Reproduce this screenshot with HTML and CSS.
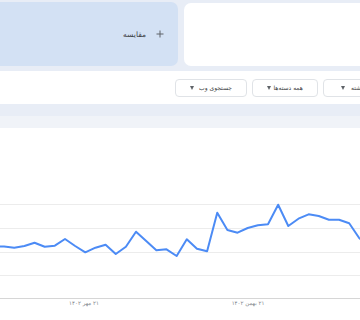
FILE: index.html
```html
<!DOCTYPE html>
<html lang="fa">
<head>
  <meta charset="UTF-8">
  <meta name="viewport" content="width=device-width, initial-scale=1.0">
  <title>روند جستجو</title>
  <link rel="stylesheet" href="styles.css">
</head>
<body>
  <div class="page">
    <div class="compare-row">
      <div class="compare-card">
        <svg class="plus" width="8" height="8" viewBox="0 0 8 8">
          <path d="M4 0.5V7.5M0.5 4H7.5" stroke="#5f6368" stroke-width="1"/>
        </svg>
        <span class="compare-label">مقایسه</span>
      </div>
      <div class="term-card"></div>
    </div>

    <div class="filter-bar">
      <button class="filter filter-web">جستجوی وب<span class="caret"></span></button>
      <button class="filter filter-cat">همه دسته‌ها<span class="caret"></span></button>
      <button class="filter filter-time">۱۲ ماه گذشته<span class="caret"></span></button>
    </div>

    <div class="chart-card">
      <div class="chart-head"></div>
      <svg class="chart" width="360" height="192" viewBox="0 0 360 192">
        <line class="grid" x1="0" y1="76.5" x2="360" y2="76.5"/>
        <line class="grid" x1="0" y1="100.5" x2="360" y2="100.5"/>
        <line class="grid" x1="0" y1="124.5" x2="360" y2="124.5"/>
        <line class="grid" x1="0" y1="147.5" x2="360" y2="147.5"/>
        <line class="axis" x1="0" y1="170.5" x2="360" y2="170.5"/>
        <polyline class="trend" points="-6,118.5 4.1,118.5 14.25,119.7 24.4,118 34.55,114.7 44.7,118.7 54.85,117.7 65,111 75.15,118 85.3,124.3 95.45,119.7 105.6,116.7 115.75,126 125.9,118.7 136,103.7 146.2,113 156.35,122.3 166.5,121.3 176.65,128 186.8,111.3 196.95,120.7 207.1,123.3 217.25,84.7 227.4,102 237.55,104.7 247.7,100 257.85,97.3 268,96.3 278.15,76.7 288.3,98 298.45,90.7 308.6,86.3 318.75,88 328.9,91.7 339.05,91.7 349.2,95.3 359.35,110.3 369.5,118"/>
        <text class="tick" x="84" y="177" text-anchor="middle" direction="rtl">۲۱ مهر ۱۴۰۲</text>
        <text class="tick" x="248" y="177" text-anchor="middle" direction="rtl">۲۱ بهمن ۱۴۰۲</text>
      </svg>
    </div>
  </div>
</body>
</html>
```

FILE: styles.css
```css
body {
  margin: 0;
  background: #e8edf6;
  font-family: 'DejaVu Sans', 'Noto Sans', sans-serif;
  color: #3c4043;
  width: 360px;
  height: 320px;
  overflow: hidden;
}

.page {
  width: 360px;
}

.compare-row {
  display: flex;
  gap: 6px;
  padding-top: 2px;
  height: 64px;
}

.compare-card {
  width: 178px;
  flex: 0 0 178px;
  background: #d3e1f4;
  border-radius: 0 7px 7px 0;
  display: flex;
  direction: rtl;
  align-items: center;
  gap: 10px;
  padding-right: 14px;
  box-sizing: border-box;
}

.plus {
  display: block;
}

.compare-label {
  font-size: 7.5px;
  color: #3c4043;
}

.term-card {
  flex: 1;
  background: #fff;
  border-radius: 7px 0 0 7px;
  margin-top: 1px;
}

.filter-bar {
  margin-top: 5px;
  height: 33px;
  background: #fff;
  display: flex;
  align-items: center;
  gap: 5px;
  padding-left: 175px;
  overflow: hidden;
}

.filter {
  flex: 0 0 auto;
  height: 18px;
  direction: rtl;
  display: flex;
  align-items: center;
  justify-content: space-between;
  padding: 0 14px 0 14px;
  background: #fff;
  border: 1px solid #e0e3e7;
  border-radius: 4px;
  font-family: inherit;
  font-size: 6px;
  color: #3c4043;
  box-sizing: border-box;
  white-space: nowrap;
}

.filter-web {
  width: 72px;
}

.filter-cat {
  width: 66px;
}

.filter-time {
  justify-content: flex-end;
  gap: 6px;
  padding-left: 17px;
}

.caret {
  width: 0;
  height: 0;
  border-left: 2.5px solid transparent;
  border-right: 2.5px solid transparent;
  border-top: 4px solid #5f6368;
}

.chart-card {
  margin-top: 12px;
  background: #fff;
}

.chart-head {
  height: 12px;
  background: #f0f3f8;
}

.chart {
  display: block;
}

.grid {
  stroke: #ececec;
  stroke-width: 1;
}

.axis {
  stroke: #d6d6d6;
  stroke-width: 1;
}

.trend {
  fill: none;
  stroke: #4c8bf5;
  stroke-width: 2;
  stroke-linejoin: round;
}

.tick {
  font-family: 'DejaVu Sans', sans-serif;
  font-size: 5.5px;
  fill: #80868b;
}
```
